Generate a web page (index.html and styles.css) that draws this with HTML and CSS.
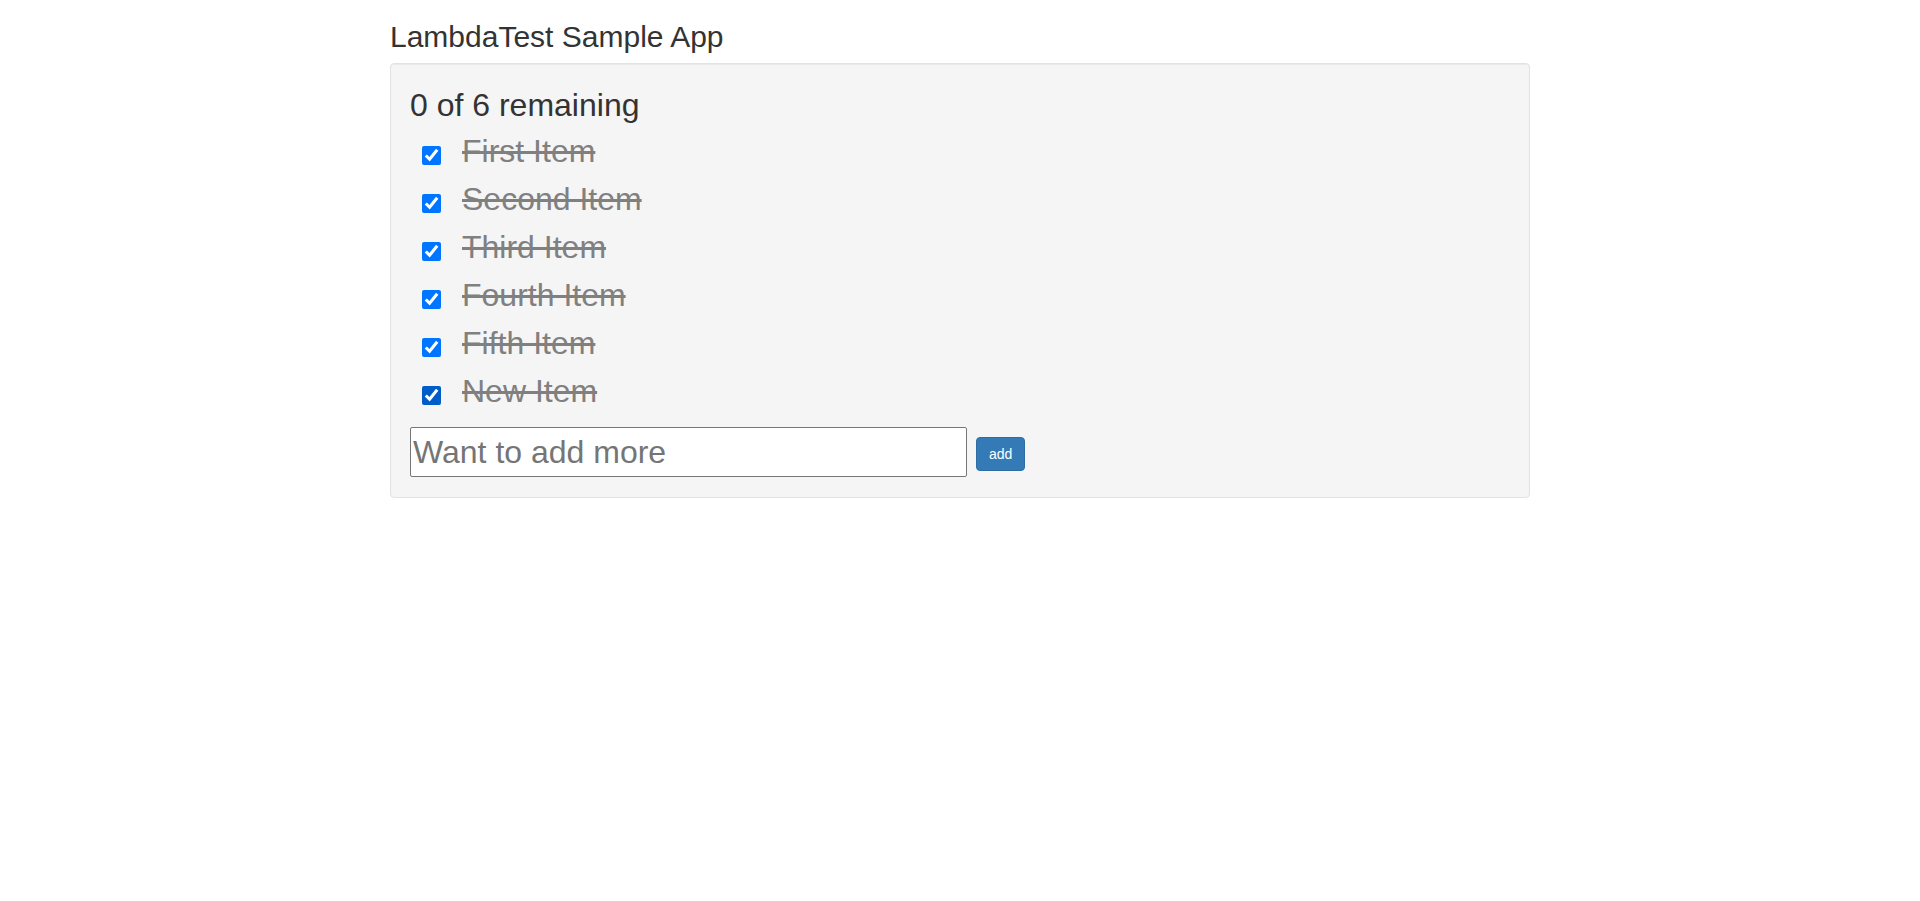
FILE: index.html
```html
<!DOCTYPE html>
<html lang="en">
<head>
<meta charset="utf-8">
<title>LambdaTest Sample App</title>
<link rel="stylesheet" href="styles.css">
</head>
<body>
<div class="container">
  <h2 class="title">LambdaTest Sample App</h2>
  <div class="well">
    <h5 class="remaining">0 of 6 remaining</h5>
    <ul class="todo-list">
      <li class="todo"><input type="checkbox" class="todo-check" checked><span class="done-true">First Item</span></li>
      <li class="todo"><input type="checkbox" class="todo-check" checked><span class="done-true">Second Item</span></li>
      <li class="todo"><input type="checkbox" class="todo-check" checked><span class="done-true">Third Item</span></li>
      <li class="todo"><input type="checkbox" class="todo-check" checked><span class="done-true">Fourth Item</span></li>
      <li class="todo"><input type="checkbox" class="todo-check" checked><span class="done-true">Fifth Item</span></li>
      <li class="todo"><input type="checkbox" class="todo-check todo-check-hover" checked><span class="done-true">New Item</span></li>
    </ul>
    <form class="add-form">
      <input type="text" class="add-input" placeholder="Want to add more">
      <input type="submit" class="btn-add" value="add">
    </form>
  </div>
</div>
</body>
</html>
```
FILE: styles.css
```css
html, body {
  margin: 0;
  padding: 0;
  background: #fff;
}
body {
  font-family: "Liberation Sans", Arial, Helvetica, sans-serif;
  font-size: 14px;
  color: #333;
}
.container {
  width: 1140px;
  margin: 0 auto;
}
.title {
  margin: 20px 0 10px;
  font-size: 30px;
  line-height: 33px;
  font-weight: 500;
  color: #333;
}
.well {
  background: #f5f5f5;
  border: 1px solid #e3e3e3;
  border-radius: 4px;
  box-shadow: inset 0 1px 1px rgba(0, 0, 0, 0.05);
  padding: 19px 19px 20px;
}
.remaining {
  margin: 0;
  font-size: 32px;
  line-height: 44px;
  font-weight: 400;
  color: #333;
}
.todo-list {
  list-style: none;
  margin: 0;
  padding: 0;
}
.todo {
  display: flex;
  align-items: flex-start;
  height: 48px;
}
.todo-check {
  width: 19px;
  height: 19px;
  margin: 19px 0 0 12px;
  accent-color: #0075ff;
}
.todo-check-hover {
  accent-color: #005cc8;
}
.done-true {
  margin-left: 21px;
  font-size: 32px;
  line-height: 48px;
  color: grey;
  text-decoration: line-through;
}
.add-form {
  display: flex;
  align-items: flex-start;
  gap: 9px;
  margin: 12px 0 0;
}
.add-input {
  box-sizing: border-box;
  width: 557px;
  height: 50px;
  margin: 0;
  padding: 1px 2px;
  border: 1px solid #767676;
  border-radius: 2px;
  background: #fff;
  font-family: "Liberation Sans", Arial, Helvetica, sans-serif;
  font-size: 32px;
  color: #333;
}
.add-input::placeholder {
  color: #757575;
}
.btn-add {
  box-sizing: border-box;
  margin: 10px 0 0;
  height: 34px;
  padding: 6px 12px;
  border: 1px solid #2e6da4;
  border-radius: 4px;
  background: #337ab7;
  color: #fff;
  font-family: "Liberation Sans", Arial, Helvetica, sans-serif;
  font-size: 14px;
  line-height: 20px;
}
```
